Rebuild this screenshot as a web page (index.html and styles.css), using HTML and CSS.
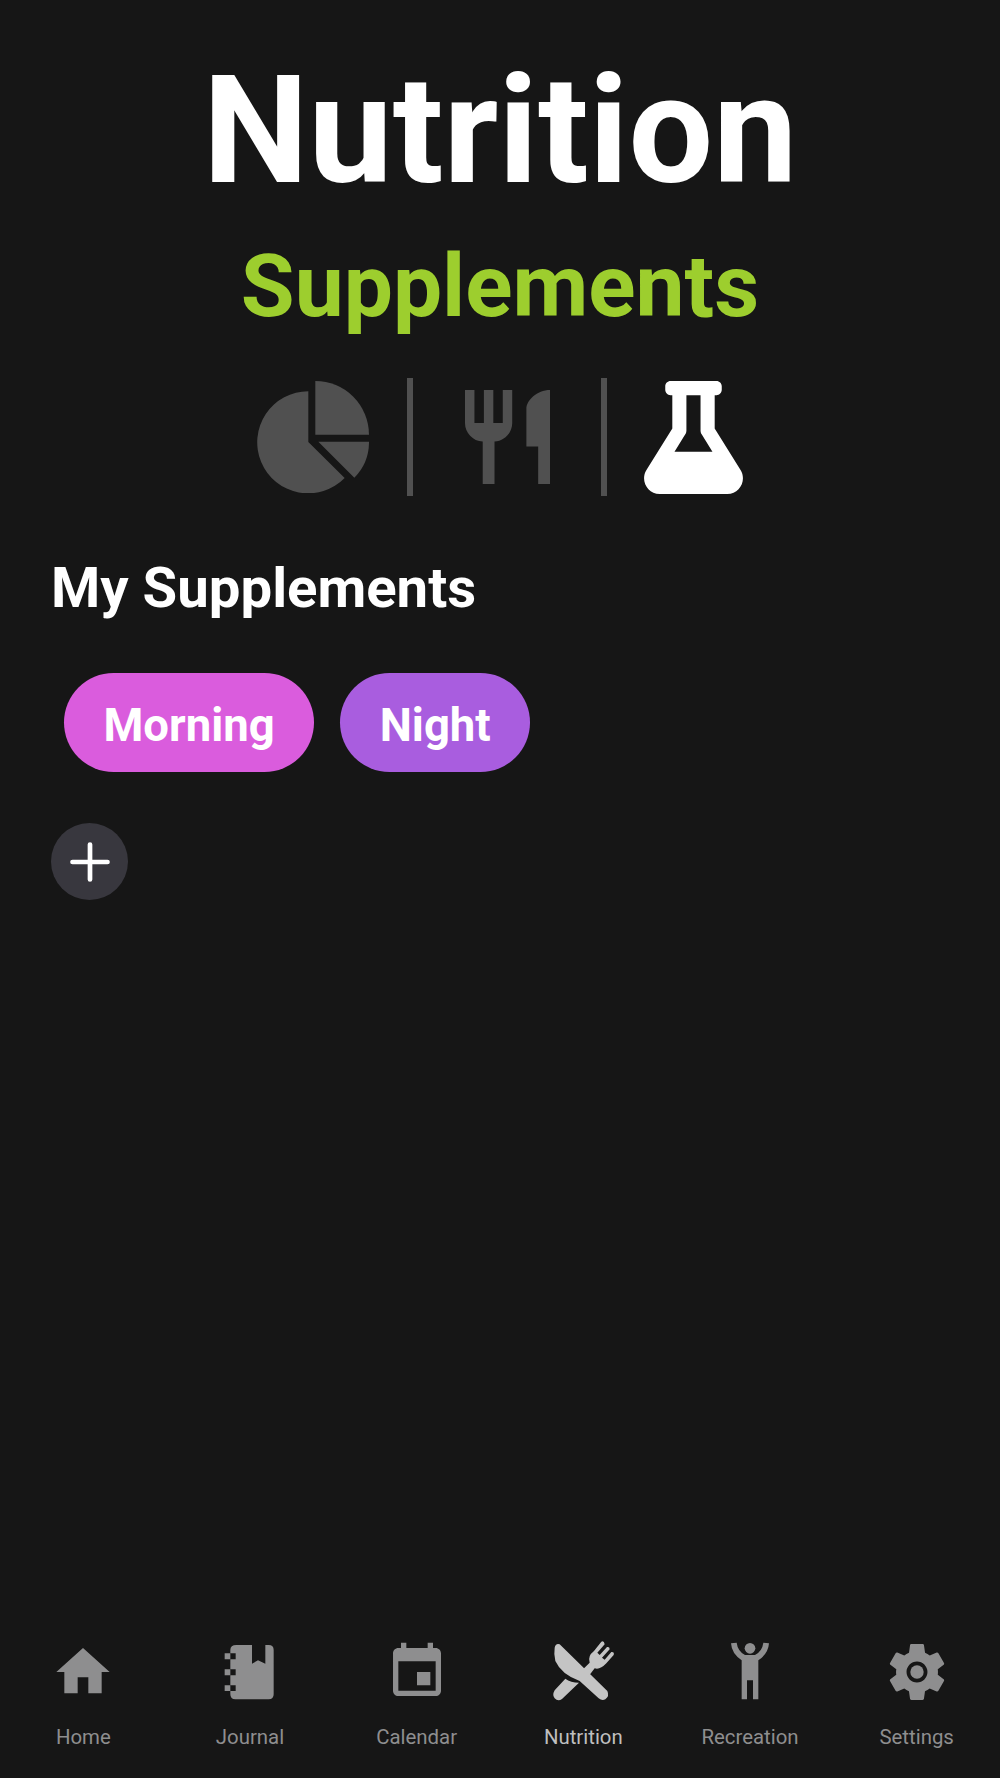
FILE: index.html
```html
<!DOCTYPE html>
<html lang="en">
<head>
<meta charset="utf-8">
<title>Nutrition</title>
<link rel="stylesheet" href="styles.css">
</head>
<body>
<div class="app">
  <main class="main">
    <h1 class="title">Nutrition</h1>
    <h2 class="subtitle">Supplements</h2>
    <div class="tabs">
      <svg class="tab-pie" viewBox="22 32 336 336"><path d="M176 63V215L285 323A153 153 0 1 1 176 63Z"/><path d="M197 32A161 161 0 0 1 358 193H197Z"/><path d="M206 214H358A152 152 0 0 1 314 322Z"/></svg>
      <span class="divider"></span>
      <svg class="tab-food" viewBox="3 2 18 20" preserveAspectRatio="none"><path d="M11 9H9V2H7v7H5V2H3v7c0 2.120 1.660 3.840 3.750 3.970V22h2.500v-9.030C11.340 12.840 13 11.120 13 9V2h-2v7zm5-3v8h2.500v8H21V2c-2.760 0-5 2.240-5 4z"/></svg>
      <span class="divider"></span>
      <svg class="tab-flask" viewBox="0 0 448 512"><path d="M437.200 403.500L320 215V64h8c13.300 0 24-10.700 24-24V24c0-13.300-10.700-24-24-24H120c-13.300 0-24 10.700-24 24v16c0 13.300 10.700 24 24 24h8v151L10.800 403.500C-18.500 450.600 15.300 512 70.900 512h306.200c55.700 0 89.400-61.500 60.100-108.500zM137.900 320l48.200-77.600c3.700-5.200 5.800-11.600 5.800-18.400V64h64v160c0 6.900 2.200 13.200 5.800 18.400l48.200 77.600h-172z"/></svg>
    </div>
    <h3 class="section">My Supplements</h3>
    <div class="pills">
      <span class="pill pill-morning">Morning</span>
      <span class="pill pill-night">Night</span>
    </div>
    <button class="add" type="button" aria-label="Add"><svg viewBox="0 0 40 40"><path d="M20 2.500V37.500M2.500 20H37.500"/></svg></button>
  </main>
  <nav class="nav">
    <div class="nav-item">
      <svg viewBox="0 0 24 24"><path d="M10 20v-6h4v6h5v-8h3L12 3 2 12h3v8z"/></svg>
      <span>Home</span>
    </div>
    <div class="nav-item">
      <svg viewBox="13 27 192 192"><path fill-rule="evenodd" d="M68 42H115V98L133 88 155 98V42H165Q180 42 180 57V190Q180 205 165 205H65Q50 205 50 190V57Q50 42 68 42ZM50 67V85H66V67ZM50 115V133H66V115ZM50 163V180H66V163Z"/><path d="M33 67H50V85H33ZM33 115H50V133H33ZM33 163H50V180H33Z"/></svg>
      <span>Journal</span>
    </div>
    <div class="nav-item">
      <svg viewBox="0 0 24 24"><path d="M17 12h-5v5h5v-5zM16 1v2H8V1H6v2H5c-1.110 0-1.990.9-1.990 2L3 19c0 1.100.89 2 2 2h14c1.100 0 2-.9 2-2V5c0-1.100-.9-2-2-2h-1V1h-2zm3 18H5V8h14v11z"/></svg>
      <span>Calendar</span>
    </div>
    <div class="nav-item active">
      <svg viewBox="19 27 192 192"><path d="M30 50Q33 36 45 40L188 180Q195 195 182 205 172 210 162 202L105 150Q50 130 32 90 27 70 30 50Z"/><path d="M62 143Q78 155 103 155L52 204Q40 212 30 202 22 192 30 178Z"/><path d="M112 118L135 95Q128 75 148 60L170 32Q178 28 180 40L158 65 165 72 187 48Q195 46 195 55L172 80 180 86 200 63Q210 62 207 72L185 97Q165 118 150 112L130 138Z"/></svg>
      <span>Nutrition</span>
    </div>
    <div class="nav-item">
      <svg viewBox="9 27 192 192"><circle cx="105" cy="52" r="16"/><path d="M48 37L65 35Q68 60 90 72H120Q142 60 145 35L162 37Q160 68 130 88V205H114V148H96V205H80V88Q50 68 48 37Z"/></svg>
      <span>Recreation</span>
    </div>
    <div class="nav-item">
      <svg viewBox="1 1 22 22"><path fill-rule="evenodd" d="M19.140 12.940c.04-.3.06-.61.06-.94 0-.32-.02-.64-.07-.94l2.030-1.580c.18-.14.23-.41.12-.61l-1.920-3.320c-.12-.22-.37-.29-.59-.22l-2.390.96c-.5-.38-1.030-.7-1.620-.94l-.36-2.540c-.04-.24-.24-.41-.48-.41h-3.840c-.24 0-.43.17-.47.41l-.36 2.540c-.59.24-1.130.57-1.620.94l-2.390-.96c-.22-.08-.47 0-.59.22L2.740 8.870c-.12.21-.08.47.12.61l2.030 1.580c-.05.3-.09.63-.09.94s.02.64.07.94l-2.030 1.580c-.18.14-.23.41-.12.61l1.920 3.320c.12.22.37.29.59.22l2.390-.96c.5.38 1.030.7 1.620.94l.36 2.540c.05.24.24.41.48.41h3.840c.24 0 .44-.17.47-.41l.36-2.540c.59-.24 1.130-.56 1.620-.94l2.390.96c.22.08.47 0 .59-.22l1.920-3.320c.12-.22.07-.47-.12-.61l-2.010-1.580zM12 15.600c-1.980 0-3.600-1.620-3.600-3.600s1.620-3.600 3.600-3.600 3.600 1.620 3.600 3.600-1.620 3.600-3.600 3.600z"/><circle cx="12" cy="12" r="2.300"/></svg>
      <span>Settings</span>
    </div>
  </nav>
</div>
</body>
</html>
```
FILE: styles.css
```css
* { box-sizing: border-box; }
html, body { margin: 0; padding: 0; }
body { background: #161616; font-family: Roboto, "Liberation Sans", sans-serif; color: #fff; }
.app { width: 1000px; height: 1778px; display: flex; flex-direction: column; justify-content: space-between; }
.main { display: flex; flex-direction: column; }
.title { margin: 49px 0 0; font-size: 150px; line-height: 164px; font-weight: 700; text-align: center; }
.subtitle { margin: 24px 0 0; font-size: 87.5px; line-height: 98px; font-weight: 700; text-align: center; color: #9dce2e; }
.tabs { margin: 43px 0 0 257px; display: flex; align-items: center; height: 118px; }
.tabs svg { fill: #505050; display: block; flex: none; }
.tab-pie { width: 112px; height: 112px; }
.divider { width: 6px; height: 118px; background: #505050; flex: none; }
.tab-pie + .divider { margin-left: 38px; }
.tab-food { width: 85px; height: 94px; margin: 0 51.500px; }
.tabs .tab-flask { width: 99px; height: 113px; margin-left: 37px; fill: #fff; }
.section { margin: 59px 0 0 51px; font-size: 56.3px; line-height: 66px; font-weight: 700; }
.pills { display: flex; gap: 26px; margin: 52px 0 0 64px; }
.pill { height: 99px; border-radius: 50px; padding: 6px 39.500px 0; display: flex; align-items: center; font-size: 45.5px; font-weight: 700; }
.pill-morning { background: #da5cdd; }
.pill-night { background: #a95ddf; }
.add { margin: 51px 0 0 51px; width: 77px; height: 77px; border: 0; padding: 0; border-radius: 50%; background: #38373e; display: flex; align-items: center; justify-content: center; }
.add svg { width: 40px; height: 40px; fill: none; stroke: #fff; stroke-width: 4.700px; stroke-linecap: round; display: block; }
.nav { display: grid; grid-template-columns: repeat(6, 1fr); padding: 0 0 29px; }
.nav-item { display: flex; flex-direction: column; align-items: center; color: #8e8e8f; font-size: 20.4px; line-height: 24px; }
.nav-item svg { width: 64px; height: 64px; fill: #8e8e8f; margin-bottom: 21px; display: block; }
.nav-item.active { color: #bfbfbf; }
.nav-item.active svg { fill: #c4c4c4; }
```
